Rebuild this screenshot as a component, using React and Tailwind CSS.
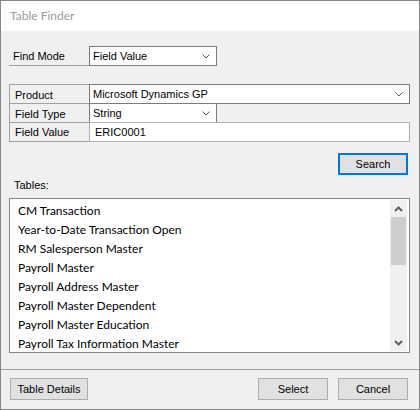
import React from "react";

const ms = { fontFamily: '"Liberation Sans", Arial, sans-serif' };
const segoe = { fontFamily: 'Lato, "Noto Sans", sans-serif' };

function Chevron() {
  return (
    <svg width="8" height="5" viewBox="0 0 8 5" className="shrink-0">
      <polyline points="0.5,0.5 4,4 7.5,0.5" fill="none" stroke="#555" strokeWidth="1" />
    </svg>
  );
}

function ScrollArrow({ down }) {
  return (
    <svg width="9" height="6" viewBox="0 0 9 6">
      <polyline
        points={down ? "1,1 4.5,4.5 8,1" : "1,5 4.5,1.5 8,5"}
        fill="none"
        stroke="#606060"
        strokeWidth="2"
      />
    </svg>
  );
}

function Combo({ w, text }) {
  return (
    <div
      className={`${w} h-[20px] border border-[#7a7a7a] bg-white flex items-center justify-between pl-[3px] pr-[6px] text-[11px] text-black`}
    >
      <span>{text}</span>
      <Chevron />
    </div>
  );
}

const items = [
  "CM Transaction",
  "Year-to-Date Transaction Open",
  "RM Salesperson Master",
  "Payroll Master",
  "Payroll Address Master",
  "Payroll Master Dependent",
  "Payroll Master Education",
  "Payroll Tax Information Master",
];

export default function App() {
  return (
    <div className="w-[420px] h-[410px] border border-[#858585] bg-[#f0f0f0] flex flex-col overflow-hidden" style={ms}>
      <div className="h-[30px] bg-white flex items-center pl-[9px] text-[12px] text-[#9a9a9a] shrink-0" style={segoe}>
        Table Finder
      </div>
      <div className="flex-1 flex flex-col text-[11px] text-black">
        <div className="mt-[15px] ml-[8px] flex">
          <div className="w-[80px] h-[20px] border-b border-[#a0a0a0] pl-[4px] pt-[2px] flex items-center">Find Mode</div>
          <Combo w="w-[128px]" text="Field Value" />
        </div>

        <div className="mt-[18px] ml-[8px] flex flex-col">
          <div className="flex h-[20px]">
            <div className="w-[80px] h-[20px] border-l border-t border-[#a0a0a0] pl-[5px] pt-[1px] flex items-center">Product</div>
            <Combo w="w-[321px]" text="Microsoft Dynamics GP" />
          </div>
          <div className="flex h-[20px] -mt-px">
            <div className="w-[80px] h-[20px] border-l border-t border-[#a0a0a0] pl-[5px] pt-[1px] flex items-center">Field Type</div>
            <Combo w="w-[128px]" text="String" />
          </div>
          <div className="flex h-[20px] -mt-px">
            <div className="w-[80px] h-[20px] border-l border-t border-b border-[#a0a0a0] pl-[5px] flex items-center">Field Value</div>
            <div className="w-[321px] h-[20px] border border-[#b0b0b0] bg-white pl-[5px] flex items-center">ERIC0001</div>
          </div>
        </div>

        <div className="mt-[11px] flex justify-end pr-[11px]">
          <button className="w-[70px] h-[22px] border-2 border-[#0078d7] bg-[#e1e1e1] text-[11px] flex items-center justify-center">
            Search
          </button>
        </div>

        <div className="mt-[3px] h-[14px] leading-[14px] pl-[13px] mb-[6px]">Tables:</div>

        <div className="ml-[8px] w-[401px] h-[155px] border border-[#828790] bg-white flex py-[1px] pr-[2px]">
          <div className="flex-1 pt-[1px] pl-[8px] text-[12px] text-black" style={segoe}>
            {items.map((t) => (
              <div key={t} className="h-[19px] leading-[19px] whitespace-nowrap">
                {t}
              </div>
            ))}
          </div>
          <div className="w-[17px] bg-[#f0f0f0] flex flex-col">
            <div className="h-[17px] flex items-center justify-center">
              <ScrollArrow />
            </div>
            <div className="mx-[1px] h-[48px] bg-[#cdcdcd]" />
            <div className="flex-1" />
            <div className="h-[17px] flex items-center justify-center">
              <ScrollArrow down />
            </div>
          </div>
        </div>

        <div className="mt-[16px] h-px bg-[#a0a0a0]" />

        <div className="mt-[8px] flex pl-[9px] pr-[11px]">
          <button className="w-[78px] h-[22px] border border-[#adadad] bg-[#e1e1e1] text-[11px] flex items-center justify-center">
            Table Details
          </button>
          <div className="flex-1" />
          <button className="w-[70px] h-[22px] border border-[#adadad] bg-[#e1e1e1] text-[11px] flex items-center justify-center">
            Select
          </button>
          <button className="ml-[10px] w-[70px] h-[22px] border border-[#adadad] bg-[#e1e1e1] text-[11px] flex items-center justify-center">
            Cancel
          </button>
        </div>
      </div>
    </div>
  );
}
